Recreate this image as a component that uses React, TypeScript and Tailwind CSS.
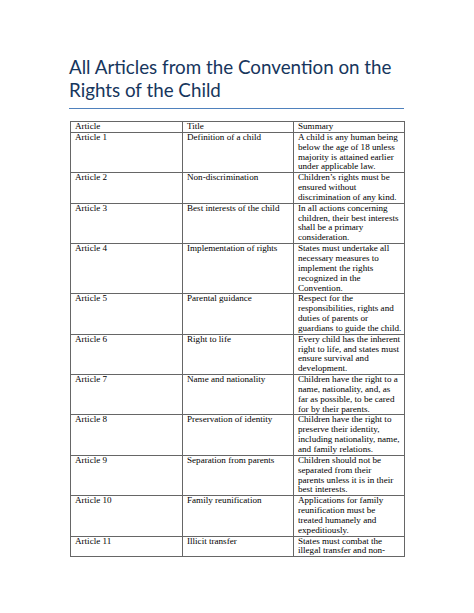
import React from "react";

type Row = { a: string; t: string; s: string[] };

const rows: Row[] = [
  { a: "Article 1", t: "Definition of a child", s: ["A child is any human being", "below the age of 18 unless", "majority is attained earlier", "under applicable law."] },
  { a: "Article 2", t: "Non-discrimination", s: ["Children\u2019s rights must be", "ensured without", "discrimination of any kind."] },
  { a: "Article 3", t: "Best interests of the child", s: ["In all actions concerning", "children, their best interests", "shall be a primary", "consideration."] },
  { a: "Article 4", t: "Implementation of rights", s: ["States must undertake all", "necessary measures to", "implement the rights", "recognized in the", "Convention."] },
  { a: "Article 5", t: "Parental guidance", s: ["Respect for the", "responsibilities, rights and", "duties of parents or", "guardians to guide the child."] },
  { a: "Article 6", t: "Right to life", s: ["Every child has the inherent", "right to life, and states must", "ensure survival and", "development."] },
  { a: "Article 7", t: "Name and nationality", s: ["Children have the right to a", "name, nationality, and, as", "far as possible, to be cared", "for by their parents."] },
  { a: "Article 8", t: "Preservation of identity", s: ["Children have the right to", "preserve their identity,", "including nationality, name,", "and family relations."] },
  { a: "Article 9", t: "Separation from parents", s: ["Children should not be", "separated from their", "parents unless it is in their", "best interests."] },
  { a: "Article 10", t: "Family reunification", s: ["Applications for family", "reunification must be", "treated humanely and", "expeditiously."] },
  { a: "Article 11", t: "Illicit transfer", s: ["States must combat the", "illegal transfer and non-"] },
];

const cell =
  "border border-[#666] align-top pl-[4.5px] pr-[1px] py-0 text-left font-normal whitespace-nowrap overflow-hidden";

export default function App() {
  return (
    <div className="w-[474px] h-[613px] bg-white overflow-hidden">
      <div className="pl-[69px] pr-[70px] pt-[55px]">
        <h1 className="font-['Lato','Open_Sans',sans-serif] text-[#17365D] text-[18.8px] leading-[23px] font-normal">
          All Articles from the Convention on the
          <br />
          Rights of the Child
        </h1>
        <div className="mt-[7px] h-px bg-[#4F81BD]" />
        <table className="mt-[12px] ml-[0.5px] w-[334px] table-fixed border-collapse font-['Liberation_Serif','Times_New_Roman',serif] text-[9.1px] leading-[9.85px] text-black">
          <colgroup>
            <col className="w-[112px]" />
            <col className="w-[111px]" />
            <col className="w-[111px]" />
          </colgroup>
          <thead>
            <tr>
              <th className={cell}>Article</th>
              <th className={cell}>Title</th>
              <th className={cell}>Summary</th>
            </tr>
          </thead>
          <tbody>
            {rows.map((r) => (
              <tr key={r.a}>
                <td className={cell}>{r.a}</td>
                <td className={cell}>{r.t}</td>
                <td className={cell}>
                  {r.s.map((l, i) => (
                    <div key={i}>{l}</div>
                  ))}
                </td>
              </tr>
            ))}
          </tbody>
        </table>
      </div>
    </div>
  );
}
